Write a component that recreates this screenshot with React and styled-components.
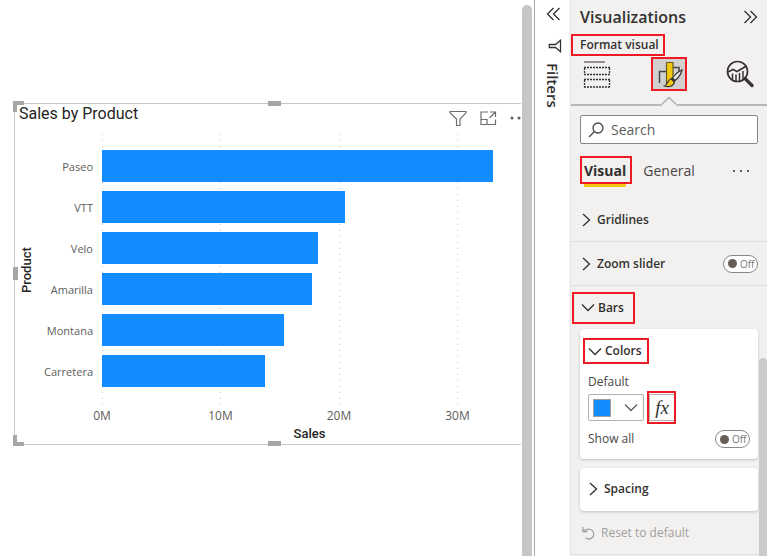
import React from "react";
import styled, { createGlobalStyle, css } from "styled-components";

const GlobalStyle = createGlobalStyle`
  *, *::before, *::after { box-sizing: border-box; }
  html, body, #root { height: 100%; }
  body {
    margin: 0;
    background: #fff;
    color: #323130;
    font-family: "Open Sans", "Noto Sans", sans-serif;
    font-size: 13px;
    overflow: hidden;
  }
  button, input, select { font: inherit; color: inherit; }
`;

const ink = "#323130";
const blue = "#118dff";

const Page = styled.div`
  display: flex;
  min-height: 100%;
`;

const Canvas = styled.main`
  flex: 1;
  min-width: 0;
  padding: 103px 0 0 14px;
`;

const CanvasScroll = styled.div`
  flex: none;
  width: 12px;
  padding: 5px 2px 0 0;
  margin-left: 1px;
  display: flex;
  &::before {
    content: "";
    flex: 1;
    border-radius: 5px 5px 0 0;
    background: #c6c6c6;
  }
`;

/* ---------- report visual ---------- */

const ChartFrame = styled.section`
  position: relative;
  border: solid #c8c8c8;
  border-width: 1px 0 1px 1px;
  padding-bottom: 2px;
`;

const edge = "#a6a6a6";
const Handle = styled.span`
  position: absolute;
  ${({ $at }) =>
    ({
      topLeft: css`left: -2px; top: -3px; width: 11px; height: 11px; border: solid ${edge}; border-width: 4px 0 0 4px;`,
      bottomLeft: css`left: -2px; bottom: -2px; width: 11px; height: 11px; border: solid ${edge}; border-width: 0 0 4px 4px;`,
      top: css`left: 50%; top: -3px; width: 13px; height: 5px; background: ${edge};`,
      bottom: css`left: 50%; bottom: -2px; width: 13px; height: 5px; background: ${edge};`,
      left: css`left: -2px; top: 50%; width: 5px; height: 13px; margin-top: -7px; background: ${edge};`,
    })[$at]}
`;

const ChartHeader = styled.header`
  display: flex;
  justify-content: space-between;
  height: 30px;
  padding-left: 4px;
  overflow: hidden;
`;

const ChartTitle = styled.h2`
  margin: 0;
  font: 400 16px/20px Roboto, sans-serif;
  color: #252423;
`;

const ChartTools = styled.div`
  display: flex;
  align-items: flex-start;
  gap: 13px;
  padding-top: 6px;
  margin-right: -7px;
`;

const IconButton = styled.button`
  display: flex;
  align-items: center;
  justify-content: center;
  padding: 0;
  border: 0;
  background: none;
  cursor: pointer;
`;

const ChartBody = styled.div`
  display: grid;
  grid-template-columns: 23px 64px 1fr;
  padding-right: 28px;
`;

const AxisTitle = styled.div`
  font: 500 13px/16px Roboto, sans-serif;
  color: #252423;
  text-align: center;
  ${({ $vertical }) =>
    $vertical
      ? css`writing-mode: vertical-rl; transform: rotate(180deg); padding-right: 4px;`
      : css`grid-column: 3; padding-left: 24px;`}
`;

const Categories = styled.div`
  display: grid;
  grid-auto-rows: 32px;
  gap: 9px;
  align-content: start;
  align-items: center;
  padding: 16px 9px 0 0;
  text-align: right;
  font-size: 11px;
  color: #605e5c;
`;

const Plot = styled.div`
  position: relative;
  display: grid;
  grid-auto-rows: 32px;
  gap: 9px;
  padding: 16px 0 19px;
`;

const GridLine = styled.span`
  position: absolute;
  top: 0;
  bottom: 0;
  width: 1px;
  background: repeating-linear-gradient(#c8c8c8 0 1px, transparent 1px 6px);
`;

const Bar = styled.div`
  position: relative;
  background: ${blue};
`;

const Ticks = styled.div`
  position: relative;
  grid-column: 3;
  height: 20px;
  font-size: 12px;
  line-height: 20px;
  color: #605e5c;
`;

const Tick = styled.span`
  position: absolute;
  transform: translateX(-50%);
`;

/* ---------- side panes ---------- */

const FiltersPane = styled.aside`
  flex: none;
  display: flex;
  flex-direction: column;
  align-items: center;
  width: 36px;
  padding: 7px 0 0 2px;
  border-left: 1px solid #a8a6a4;
  border-right: 1px solid #f7f6f5;
`;

const FiltersTitle = styled.h2`
  margin: 10px 0 0;
  writing-mode: vertical-rl;
  font-size: 15px;
  line-height: 20px;
  font-weight: 600;
`;

const FunnelSlot = styled.div`
  display: flex;
  margin: 18px 0 0 3px;
`;

const VizPane = styled.aside`
  flex: none;
  width: 198px;
  background: #f2f1f0;
  border-right: 1px solid #fff;
  border-left: 1px solid #eae9e8;
`;

const PaneHeader = styled.header`
  display: flex;
  justify-content: space-between;
  align-items: center;
  height: 34px;
  padding: 0 9px;
`;

const PaneTitle = styled.h2`
  margin: 0;
  font-size: 16px;
  line-height: 20px;
  font-weight: 600;
`;

const Marked = styled.div`
  position: relative;
  display: flex;
  width: fit-content;
  &::after {
    content: "";
    position: absolute;
    inset: ${({ $inset }) => $inset};
    border: 2px solid #ed1c24;
    pointer-events: none;
  }
`;

const Subtitle = styled.h3`
  margin: 0 0 0 9px;
  font-size: 12px;
  line-height: 22px;
  font-weight: 600;
`;

const ModeTabs = styled.nav`
  display: flex;
  justify-content: space-between;
  padding: 1px 9px 0 8px;
`;

const ModeButton = styled.button`
  display: flex;
  align-items: center;
  justify-content: center;
  width: 36px;
  height: 34px;
  padding: 0;
  border: 0;
  background: ${({ $active }) => ($active ? "#d2d0ce" : "none")};
`;

const NotchLine = styled.div`
  display: flex;
  align-items: flex-end;
  height: 15px;
  &::before, &::after {
    content: "";
    flex: 1;
    height: 2px;
    background: #bab8b6;
  }
`;

const SearchBox = styled.label`
  display: flex;
  align-items: center;
  gap: 7px;
  height: 29px;
  margin: 9px 9px 0;
  padding: 0 7px;
  border: 1px solid #8a8886;
  border-radius: 2px;
  background: #fff;
`;

const SearchInput = styled.input`
  flex: 1;
  min-width: 0;
  padding: 0;
  border: 0;
  outline: 0;
  background: none;
  font-size: 14px;
  &::placeholder { color: #605e5c; opacity: 1; }
`;

const FormatTabs = styled.div`
  display: flex;
  align-items: center;
  height: 54px;
  padding: 0 17px 0 13px;
`;

const FormatTab = styled.button`
  padding: 0;
  border: 0;
  background: none;
  font-size: 14px;
  line-height: 24px;
  font-weight: ${({ $active }) => ($active ? 700 : 400)};
  color: ${({ $active }) => ($active ? ink : "#484644")};
  box-shadow: ${({ $active }) => ($active ? "0 4px 0 #f2c811" : "none")};
`;

const TabStrip = styled.div`
  display: flex;
  flex: 1;
  gap: 17px;
`;

const SectionList = styled.div`
  position: relative;
`;

const ListScroll = styled.span`
  position: absolute;
  right: 0;
  top: 160px;
  bottom: -2px;
  width: 8px;
  border-radius: 4px 4px 0 0;
  background: #cdcbc9;
`;

const Section = styled.section`
  border-bottom: 1px solid #dfdedd;
`;

const SectionRow = styled.div`
  display: flex;
  align-items: center;
  justify-content: space-between;
  height: 43px;
  padding: 0 9px 0 10px;
`;

const Disclosure = styled.button`
  display: flex;
  align-items: center;
  gap: ${({ $tight }) => ($tight ? "3px" : "5px")};
  padding: 0;
  border: 0;
  background: none;
  font-size: 12px;
  line-height: 20px;
  font-weight: 600;
`;

const Cards = styled.div`
  display: grid;
  gap: 9px;
  padding: 0 9px;
`;

const Card = styled.div`
  padding: ${({ $open }) => ($open ? "12px 8px 10px" : "11px 8px 12px")};
  border-radius: 4px;
  background: #fff;
  box-shadow: 0 1px 3px rgba(0, 0, 0, 0.2);
`;

const FieldLabel = styled.label`
  display: block;
  font-size: 12px;
  line-height: 20px;
  color: #484644;
`;

const ColorField = styled.div`
  display: grid;
  gap: 2px;
  margin-top: 11px;
`;

const ColorRow = styled.div`
  display: flex;
  gap: 5px;
`;

const SwatchPicker = styled.div`
  display: grid;
  grid-template-columns: 1fr auto;
  align-items: center;
  width: 56px;
  height: 27px;
  padding: 0 5px 0 4px;
  border: 1px solid #b3b0ad;
  border-radius: 2px;
`;

const SwatchSelect = styled.select`
  grid-area: 1 / 1 / 2 / 3;
  width: 100%;
  height: 25px;
  appearance: none;
  border: 0;
  background: none;
  color: transparent;
`;

const Swatch = styled.span`
  grid-area: 1 / 1;
  width: 18px;
  height: 18px;
  border: 1px solid #a19f9d;
  background: ${blue};
  pointer-events: none;
`;

const PickerArrow = styled.span`
  grid-area: 1 / 2;
  display: flex;
  pointer-events: none;
`;

const FxButton = styled.button`
  width: 26px;
  height: 27px;
  padding: 0;
  border: 1px solid #b3b0ad;
  background: #fff;
  font: italic 19px/22px "Liberation Serif", serif;
`;

const ShowAll = styled.div`
  display: flex;
  justify-content: space-between;
  align-items: center;
  margin: 8px 0 0;
`;

const SwitchLabel = styled.label`
  display: flex;
  align-items: center;
  gap: 3px;
  width: 35px;
  height: 18px;
  padding-left: 4px;
  border: 1px solid #8a8886;
  border-radius: 9px;
  background: #fff;
  font-size: 10px;
  line-height: 16px;
  color: #797775;
`;

const SwitchInput = styled.input`
  appearance: none;
  width: 9px;
  height: 9px;
  margin: 0;
  border-radius: 50%;
  background: #665c58;
`;

const ResetButton = styled.button`
  display: flex;
  align-items: center;
  gap: 6px;
  height: 43px;
  padding: 0 0 0 11px;
  border: 0;
  background: none;
  font-size: 12px;
  color: #a19f9d;
`;

/* ---------- icons ---------- */

const Stroke = ({ w, h, d, color = ink, width = 1.3, children }) => (
  <svg width={w} height={h} viewBox={`0 0 ${w} ${h}`} fill="none" stroke={color} strokeWidth={width} aria-hidden="true">
    {d && <path d={d} />}
    {children}
  </svg>
);

const ChevronRight = () => <Stroke w={11} h={14} d="M2 1l6.5 6L2 13" />;
const ChevronDown = ({ color }) => <Stroke w={14} h={9} color={color} d="M1 1.5l6 6 6-6" />;
const CollapseIcon = () => <Stroke w={15} h={14} d="M7.5 1l-6 6 6 6M13.5 1l-6 6 6 6" />;
const ExpandIcon = () => <Stroke w={15} h={14} d="M1.5 1l6 6-6 6M7.5 1l6 6-6 6" />;
const PaneFunnel = () => <Stroke w={14} h={14} d="M12.5 1.3v11.4L7.5 8.5H1.3v-3h6.2z" />;
const ChartFunnel = () => (
  <Stroke w={18} h={17} color="#706e6c" width={1.2} d="M1 1.5h16v1.3L11 9v6.5H7.5V9L1 2.8z" />
);
const FocusIcon = () => (
  <Stroke w={17} h={17} color="#706e6c" width={1.2} d="M8 2H1v12.500h14.500V9.500M10 2h5.500v5M15.500 2L9.500 8M1 9.500h6v5" />
);
const DotsIcon = ({ r = 1.5, color = "#605e5c" }) => (
  <svg width="18" height="17" viewBox="0 0 18 17" fill={color} aria-hidden="true">
    <circle cx="2" cy="8" r={r} /><circle cx="9" cy="8" r={r} /><circle cx="16" cy="8" r={r} />
  </svg>
);

const FieldsIcon = () => (
  <Stroke w={28} h={29}>
    <path d="M1 2h21" stroke="#605e5c" />
    <path d="M1 7.500h26M1 14.500h26M1 19.500h26M1 27h26" strokeDasharray="2 1" />
    <path d="M1.500 8v6M26.500 8v6M1.500 20v7M26.500 20v7" strokeDasharray="2 1" />
  </Stroke>
);

const PaintIcon = () => (
  <svg width="28" height="30" viewBox="0 0 28 30" fill="none" aria-hidden="true">
    <path d="M4.500 24V12.500H11M18 8.500h6V12" stroke="#484644" strokeWidth="1.500" />
    <path d="M11.500 3.500h6.500v21h-6.500z" fill="#f2c811" stroke="#6b5a1a" strokeWidth="1.200" />
    <path d="M27 11c-4 1.500-7 4.500-9.500 8l2.500 2.500c3.500-2.500 6-6.500 7-10.500z" fill="#e8e6e4" stroke="#323130" strokeWidth="1.200" />
    <path d="M16.500 19.500l3 3c-.5 4.500-5 6-10 4.500 3-1 3-6 7-7.500z" fill="#f2c811" stroke="#323130" strokeWidth="1.200" />
    <path d="M16.500 19.500l3 3" stroke="#323130" strokeWidth="2" />
  </svg>
);

const AnalyticsIcon = () => (
  <svg width="28" height="28" viewBox="0 0 28 28" fill="none" stroke="#3b3134" aria-hidden="true">
    <circle cx="11.500" cy="11.500" r="10" strokeWidth="1.700" />
    <path d="M2 12l5-2.500 4 2L20.500 6" strokeWidth="1.600" />
    <path d="M6.500 13.500v6M10 14.500v6.500M13.500 13v8M17 11v8.500" strokeWidth="1.500" />
    <path d="M19 18.500l7 7" strokeWidth="3.200" strokeLinecap="round" />
  </svg>
);

const SearchIcon = () => (
  <Stroke w={16} h={16} color="#484644">
    <circle cx="10" cy="6" r="5" />
    <path d="M6.500 9.500L1 15" />
  </Stroke>
);

const ResetIcon = () => (
  <Stroke w={13} h={14} color="#a19f9d" d="M1 1v4.500h4.500M1.500 5.200C4 2.600 8 2.300 10.300 4.600a4.900 4.900 0 0 1-6.900 7" />
);

const NotchIcon = () => (
  <Stroke w={18} h={10} color="#b3b1af" width={1.500} d="M0 9h1L9 1.500 17 9h1" />
);

/* ---------- composition ---------- */

const MAX = 33;
const rows = [
  ["Paseo", 33],
  ["VTT", 20.5],
  ["Velo", 18.25],
  ["Amarilla", 17.7],
  ["Montana", 15.35],
  ["Carretera", 13.75],
];
const ticks = [0, 10, 20, 30];
const pct = (v) => `${(v / MAX) * 100}%`;

function SalesChart() {
  return (
    <ChartFrame>
      <ChartHeader>
        <ChartTitle>Sales by Product</ChartTitle>
        <ChartTools>
          <IconButton aria-label="Filters"><ChartFunnel /></IconButton>
          <IconButton aria-label="Focus mode"><FocusIcon /></IconButton>
          <IconButton aria-label="More options"><DotsIcon /></IconButton>
        </ChartTools>
      </ChartHeader>
      <ChartBody>
        <AxisTitle $vertical>Product</AxisTitle>
        <Categories>
          {rows.map(([name]) => <span key={name}>{name}</span>)}
        </Categories>
        <Plot>
          {ticks.map((t) => <GridLine key={t} style={{ left: pct(t) }} />)}
          {rows.map(([name, v]) => <Bar key={name} style={{ width: pct(v) }} />)}
        </Plot>
        <Ticks>
          {ticks.map((t) => <Tick key={t} style={{ left: pct(t) }}>{t}M</Tick>)}
        </Ticks>
        <AxisTitle>Sales</AxisTitle>
      </ChartBody>
      {["topLeft", "top", "left", "bottomLeft", "bottom"].map((at) => <Handle key={at} $at={at} />)}
    </ChartFrame>
  );
}

function OffSwitch({ name }) {
  return (
    <SwitchLabel>
      <SwitchInput type="checkbox" role="switch" aria-label={name} />
      Off
    </SwitchLabel>
  );
}

export default function App() {
  return (
    <Page>
      <GlobalStyle />
      <Canvas><SalesChart /></Canvas>
      <CanvasScroll />
      <FiltersPane>
        <IconButton aria-label="Expand filters"><CollapseIcon /></IconButton>
        <FunnelSlot><PaneFunnel /></FunnelSlot>
        <FiltersTitle>Filters</FiltersTitle>
      </FiltersPane>
      <VizPane>
        <PaneHeader>
          <PaneTitle>Visualizations</PaneTitle>
          <IconButton aria-label="Collapse pane"><ExpandIcon /></IconButton>
        </PaneHeader>
        <Marked $inset="0 -6px 0 0"><Subtitle>Format visual</Subtitle></Marked>
        <ModeTabs>
          <ModeButton aria-label="Build visual"><FieldsIcon /></ModeButton>
          <Marked $inset="0">
            <ModeButton $active aria-label="Format visual"><PaintIcon /></ModeButton>
          </Marked>
          <ModeButton aria-label="Analytics"><AnalyticsIcon /></ModeButton>
        </ModeTabs>
        <NotchLine><NotchIcon /></NotchLine>
        <SearchBox>
          <SearchIcon />
          <SearchInput type="search" placeholder="Search" aria-label="Search" />
        </SearchBox>
        <FormatTabs>
          <TabStrip>
            <Marked $inset="-3px -6px -1px -4px"><FormatTab $active>Visual</FormatTab></Marked>
            <FormatTab>General</FormatTab>
          </TabStrip>
          <IconButton aria-label="More options"><DotsIcon r={1} color={ink} /></IconButton>
        </FormatTabs>
        <SectionList>
          <Section>
            <SectionRow><Disclosure aria-expanded="false"><ChevronRight />Gridlines</Disclosure></SectionRow>
          </Section>
          <Section>
            <SectionRow>
              <Disclosure aria-expanded="false"><ChevronRight />Zoom slider</Disclosure>
              <OffSwitch name="Zoom slider" />
            </SectionRow>
          </Section>
          <Section>
            <SectionRow>
              <Marked $inset="-6px -11px -6px -9px">
                <Disclosure $tight aria-expanded="true"><ChevronDown />Bars</Disclosure>
              </Marked>
            </SectionRow>
            <Cards>
              <Card $open>
                <Marked $inset="-3px -7px -3px -5px">
                  <Disclosure $tight aria-expanded="true"><ChevronDown />Colors</Disclosure>
                </Marked>
                <ColorField>
                  <FieldLabel htmlFor="bar-color">Default</FieldLabel>
                  <ColorRow>
                    <SwatchPicker>
                      <SwatchSelect id="bar-color" defaultValue="blue"><option value="blue" aria-label="Blue" /></SwatchSelect>
                      <Swatch />
                      <PickerArrow><ChevronDown color="#605e5c" /></PickerArrow>
                    </SwatchPicker>
                    <Marked $inset="-3px -1px -3px -2px">
                      <FxButton aria-label="Conditional formatting">fx</FxButton>
                    </Marked>
                  </ColorRow>
                </ColorField>
                <ShowAll><FieldLabel as="span">Show all</FieldLabel><OffSwitch name="Show all" /></ShowAll>
              </Card>
              <Card>
                <Disclosure aria-expanded="false"><ChevronRight />Spacing</Disclosure>
              </Card>
            </Cards>
            <ResetButton><ResetIcon />Reset to default</ResetButton>
          </Section>
          <ListScroll />
        </SectionList>
      </VizPane>
    </Page>
  );
}
